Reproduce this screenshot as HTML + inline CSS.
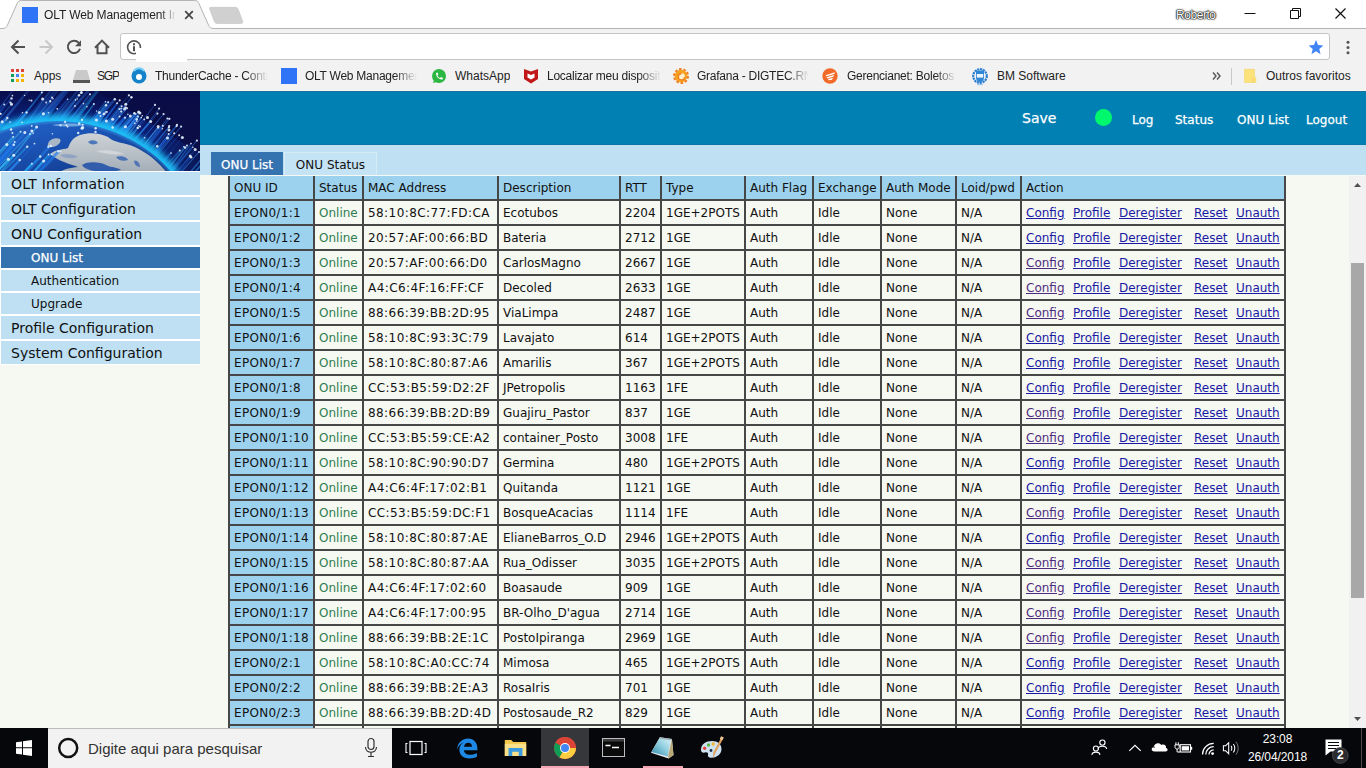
<!DOCTYPE html>
<html lang="pt-BR">
<head>
<meta charset="utf-8">
<title>OLT Web Management Interface</title>
<style>
html,body{margin:0;padding:0;}
body{width:1366px;height:768px;overflow:hidden;position:relative;background:#f6f8f2;font-family:"Liberation Sans",sans-serif;}
.abs{position:absolute;}
/* ---------- browser chrome ---------- */
#titlebar{left:0;top:0;width:1366px;height:29px;background:#fff;z-index:2;}
#toolbar{left:0;top:28px;width:1366px;height:34px;background:#f2f2f2;}
#bookbar{left:0;top:62px;width:1366px;height:28px;background:#f2f2f2;border-bottom:1px solid #fafafa;}
#tabtxt{left:44px;top:7px;font-size:12px;color:#222;white-space:nowrap;width:150px;overflow:hidden;height:16px;line-height:16px;letter-spacing:-.1px;-webkit-mask-image:linear-gradient(90deg,#000 88%,transparent 100%);mask-image:linear-gradient(90deg,#000 88%,transparent 100%);}
#user{left:1176px;top:8px;font-size:12px;line-height:14px;color:#fff;letter-spacing:-.45px;text-shadow:0 0 1px #000,0 0 1px #000,0 0 2px #222,0 0 2px #444;}
#urlbox{left:120px;top:5px;width:1210px;height:27px;background:#fff;border:1px solid #c4c4c4;border-radius:3px;box-sizing:border-box;}
.bm{top:68px;font-size:12px;color:#222;white-space:nowrap;line-height:16px;height:16px;overflow:hidden;}
.bm.fade{letter-spacing:-.25px;}
.fade{-webkit-mask-image:linear-gradient(90deg,#000 80%,transparent 100%);mask-image:linear-gradient(90deg,#000 80%,transparent 100%);}
/* ---------- page ---------- */
#page{left:0;top:90px;width:1366px;height:638px;background:#f6f8f2;overflow:hidden;font-family:"DejaVu Sans","Liberation Sans",sans-serif;}
#hdr{left:200px;top:1px;width:1166px;height:54px;background:#0080b3;box-shadow:inset 0 1px 0 #1a6f9c,inset 0 -1px 0 #0b76a6;}
#band{left:200px;top:55px;width:1166px;height:30px;background:#bee0f2;}
#hdr span{position:absolute;color:#fff;-webkit-text-stroke:.25px #fff;font-size:12px;white-space:nowrap;line-height:16px;}
#logo{left:0;top:1px;width:200px;height:80px;}
.mi{left:1px;width:199px;height:23px;background:#bee0f2;font-size:14px;line-height:25px;overflow:hidden;color:#111;padding-left:10px;box-sizing:border-box;white-space:nowrap;}
.si{left:1px;width:199px;height:21px;background:#bee0f2;font-size:12px;line-height:22px;overflow:hidden;color:#111;padding-left:30px;box-sizing:border-box;white-space:nowrap;}
.si.sel{background:#3572b0;color:#fff;-webkit-text-stroke:.25px #fff;}
#menu{left:0;top:81px;width:200px;height:194px;background:#fff;}
.tab{top:62px;height:23px;line-height:26px;overflow:hidden;font-size:12px;box-sizing:border-box;text-align:center;white-space:nowrap;}
#tbwrap{left:228px;top:86px;width:1060px;height:552px;overflow:hidden;}
table{border-collapse:collapse;table-layout:fixed;width:1058px;margin-top:-2px;font-size:12px;color:#111;}
td,th{border:2px solid #474747;height:23px;padding:0 0 0 4px;text-align:left;font-weight:normal;white-space:nowrap;overflow:hidden;background:#f6f8f2;line-height:14px;}
th,td.id{background:#9cd2ee;}
td.on{color:#2e7d4f;}
td.id{letter-spacing:.3px;}
td.mac{letter-spacing:.42px;}
td.ac a{color:#1919a4;text-decoration:underline;position:absolute;}
td.ac{position:relative;}
td.ac a.v{color:#4f2b80;}
td.ac a{top:5px;}
td.ac a.p{left:51px;}
td.ac a.d{left:97px;}
td.ac a.r{left:172px;}
td.ac a.u{left:214px;}
/* ---------- scrollbar ---------- */
#sb{left:1349px;top:86px;width:17px;height:552px;background:#f1f1f1;}
#thumb{left:1351px;top:173px;width:13px;height:335px;background:#a8a8a8;}
/* ---------- taskbar ---------- */
#task{left:0;top:728px;width:1366px;height:40px;background:#06070b;}
#search{left:48px;top:0;width:344px;height:40px;background:#f2f2f2;border-top:1px solid #bdbdbd;box-sizing:border-box;}
#search span{position:absolute;left:40px;top:11px;font-size:15px;color:#333;white-space:nowrap;line-height:18px;}
#clock{left:1240px;top:1.500px;width:75px;text-align:center;color:#fff;font-size:12px;line-height:18px;letter-spacing:-.1px;}
</style>
</head>
<body>

<!-- ================= BROWSER CHROME ================= -->
<div id="titlebar" class="abs">
  <svg class="abs" style="left:0;top:0" width="260" height="29" viewBox="0 0 260 29">
    <path d="M0 29 V28.500 H3 C5.500 28.300 6.500 27.200 7.500 25 L17 3.700 C18 1.300 19 .500 21.500 .500 H194.500 C197 .500 198 1.300 199 3.700 L208.500 25 C209.500 27.200 210.500 28.300 213 28.500 H260 V29 Z" fill="#f2f2f2"/>
    <path d="M0 28.500 H3 C5.500 28.300 6.500 27.200 7.500 25 L17 3.700 C18 1.300 19 .500 21.500 .500 H194.500 C197 .500 198 1.300 199 3.700 L208.500 25 C209.500 27.200 210.500 28.300 213 28.500 H260" fill="none" stroke="#b4b4b4" stroke-width="1"/>
    <path d="M210.500 7.300 L235 7.300 C236.800 7.300 237.600 8 238.300 9.600 L242.600 21 C243.200 22.700 242.600 23.500 241 23.500 L217.500 23.500 C215.700 23.500 214.900 22.800 214.200 21.200 L209.800 9.600 C209.200 8 209.500 7.300 210.500 7.300 Z" fill="#d0d0d0" stroke="#c4c4c4" stroke-width=".6"/>
    <rect x="22" y="7" width="16" height="16" fill="#2f73f6"/>
    <path d="M185.200 11.200 L192.800 18.800 M192.800 11.200 L185.200 18.800" stroke="#444" stroke-width="1.700" fill="none"/>
  </svg>
  <div id="tabtxt" class="abs fade" style="width:132px">OLT Web Management Interface</div>
  <div class="abs" style="left:259px;top:28px;width:1107px;height:1px;background:#b4b4b4"></div>
  <div id="user" class="abs">Roberto</div>
  <svg class="abs" style="left:1230px;top:0" width="136" height="28" viewBox="0 0 136 28">
    <path d="M14.5 13.5 H25.5" stroke="#111" stroke-width="1"/>
    <path d="M60.5 10.5 H68.5 V18.5 H60.5 Z M62.5 10.5 V8.5 H70.5 V16.5 H68.5" stroke="#111" stroke-width="1" fill="none"/>
    <path d="M105.5 8.5 L115.5 18.5 M115.5 8.5 L105.5 18.5" stroke="#111" stroke-width="1.2" fill="none"/>
  </svg>
</div>

<div id="toolbar" class="abs">
  <svg class="abs" style="left:0;top:0" width="125" height="34" viewBox="0 0 125 34">
    <g fill="none" stroke="#505050" stroke-width="2">
      <path d="M25 19 H12.500 M18.500 12.500 L12 19 L18.500 25.500"/>
      <path d="M39.500 19 H52 M45.500 12.500 L52 19 L45.500 25.500" stroke="#c8c8c8"/>
      <path d="M78.800 14.800 A6.200 6.200 0 1 0 80 20.800"/>
      <path d="M95 19.800 L102 12.600 L109 19.800 M97.500 18 V25.300 H106.500 V18"/>
    </g>
    <path d="M81 12.300 V18.300 H75 Z" fill="#505050"/>
  </svg>
  <div id="urlbox" class="abs"></div>
  <svg class="abs" style="left:125px;top:10px" width="18" height="18" viewBox="0 0 18 18">
    <circle cx="9" cy="9.300" r="6.400" fill="none" stroke="#555" stroke-width="1.600"/>
    <rect x="8" y="8.200" width="2" height="5" fill="#505050"/><rect x="8" y="5.300" width="2" height="2" fill="#505050"/>
  </svg>
  <div class="abs" style="left:136px;top:20px;width:51px;height:14px;background:#fff"></div>
  <svg class="abs" style="left:1306px;top:9px" width="20" height="20" viewBox="0 0 20 20">
    <path d="M10 3 L12.050 8 L17.400 8.450 L13.300 11.950 L14.550 17.200 L10 14.350 L5.450 17.200 L6.700 11.950 L2.600 8.450 L7.950 8 Z" fill="#4285f4"/>
  </svg>
  <svg class="abs" style="left:1344px;top:9px" width="8" height="20" viewBox="0 0 8 20">
    <circle cx="4" cy="5.200" r="1.500" fill="#555"/><circle cx="4" cy="10.500" r="1.500" fill="#555"/><circle cx="4" cy="15.800" r="1.500" fill="#555"/>
  </svg>
</div>

<div id="bookbar" class="abs"></div>
<!-- bookmark icons -->
<svg class="abs" style="left:0;top:62px" width="1366" height="28" viewBox="0 0 1366 28">
  <!-- apps grid -->
  <g>
    <rect x="11" y="7" width="3" height="3" fill="#db4437"/><rect x="16" y="7" width="3" height="3" fill="#db4437"/><rect x="21" y="7" width="3" height="3" fill="#db4437"/>
    <rect x="11" y="12" width="3" height="3" fill="#0f9d58"/><rect x="16" y="12" width="3" height="3" fill="#4285f4"/><rect x="21" y="12" width="3" height="3" fill="#f4b400"/>
    <rect x="11" y="17" width="3" height="3" fill="#0f9d58"/><rect x="16" y="17" width="3" height="3" fill="#f4b400"/><rect x="21" y="17" width="3" height="3" fill="#f4b400"/>
  </g>
  <!-- SGP drive icon -->
  <path d="M76 8 H87 L90 18 H73 Z" fill="#c9c9c9"/><rect x="73" y="18" width="17" height="3" fill="#555"/>
  <!-- thundercache -->
  <circle cx="139" cy="14" r="7.5" fill="#1583c9"/><circle cx="139" cy="15" r="3" fill="#fff"/><path d="M134 9 A6 6 0 0 1 144 9" stroke="#7fd0f5" stroke-width="2" fill="none"/>
  <!-- OLT -->
  <rect x="281" y="6" width="16" height="16" fill="#2f73f6"/>
  <!-- whatsapp -->
  <circle cx="439" cy="14" r="7" fill="#2cb742"/><path d="M433 21 L434.5 16.5 L438 19.5 Z" fill="#2cb742"/><path d="M436 11 C436 15 439 17.5 442.5 17.5 L443 16 L441 15 L440 16 C438.5 15.5 437.5 14 437.5 13 L438.3 12.3 L437.5 10.5 Z" fill="#fff"/>
  <!-- mcafee -->
  <path d="M524 7 L531 9.5 L538 7 V17 L531 21.5 L524 17 Z" fill="#c01818"/><path d="M527.5 11.5 L531 13 L534.5 11.5 V15.5 L531 17.5 L527.5 15.5 Z" fill="#fff"/>
  <!-- grafana -->
  <circle cx="681" cy="14" r="6.300" fill="#f6a21e"/><circle cx="681" cy="14" r="7" fill="none" stroke="#f07f22" stroke-width="2" stroke-dasharray="2.600 1.800"/><circle cx="681.600" cy="14.600" r="3.300" fill="#fdf0cf"/><path d="M681.500 11.500 A3.200 3.200 0 1 0 684.700 15" stroke="#f4801f" stroke-width="1.300" fill="none"/>
  <!-- gerencianet -->
  <circle cx="830" cy="14" r="7.700" fill="#f26a2a"/><path d="M825.500 13.200 L835 10.200 L834.300 12 L826.500 14.300 Z M826.500 15.300 L834 13 L833.300 14.800 L827.500 16.400 Z M827.800 17.300 L833 15.800 L832 17.800 L829 18.300 Z" fill="#fff"/>
  <!-- BM -->
  <circle cx="980" cy="14" r="6.800" fill="none" stroke="#2e7fd0" stroke-width="2.200" stroke-dasharray="2.200 .700"/><path d="M976 8.500 H984 V16 C984 18.500 981.500 20 980 20.800 C978.500 20 976 18.500 976 16 Z" fill="#2f86d6"/><rect x="976.800" y="12" width="6.400" height="3.600" fill="#eef6ff"/><rect x="977" y="22" width="6" height="1.200" fill="#9ec7ee"/>
  <!-- overflow chevrons -->
  <path d="M1213 10.5 L1216 14 L1213 17.5 M1217 10.5 L1220 14 L1217 17.5" stroke="#555" stroke-width="1.4" fill="none"/>
  <rect x="1231" y="6" width="1" height="17" fill="#c8c8c8"/>
  <!-- folder -->
  <path d="M1244.500 7.300 H1254.500 V15.500 H1255.800 V20.500 H1244.500 Z" fill="#fde27c" stroke="#f3d363" stroke-width=".6"/><path d="M1253 16 V20.500" stroke="#f0cd58" stroke-width=".8"/>
</svg>
<div class="abs bm" style="left:34px">Apps</div>
<div class="abs bm" style="left:97px;letter-spacing:-1.2px">SGP</div>
<div class="abs bm fade" style="left:155px;width:113px">ThunderCache - Controle</div>
<div class="abs bm fade" style="left:305px;width:112px">OLT Web Management</div>
<div class="abs bm" style="left:455px">WhatsApp</div>
<div class="abs bm fade" style="left:547px;width:114px">Localizar meu dispositivo</div>
<div class="abs bm fade" style="left:697px;width:112px">Grafana - DIGTEC.RN.</div>
<div class="abs bm fade" style="left:847px;width:110px">Gerencianet: Boletos e</div>
<div class="abs bm" style="left:997px">BM Software</div>
<div class="abs bm" style="left:1266px">Outros favoritos</div>

<!-- ================= PAGE ================= -->
<div id="page" class="abs">
  <div id="hdr" class="abs">
    <span style="left:822px;top:18px;font-size:14px;line-height:18px">Save</span>
    <span style="left:932px;top:21px">Log</span>
    <span style="left:975px;top:21px">Status</span>
    <span style="left:1037px;top:21px">ONU List</span>
    <span style="left:1106px;top:21px">Logout</span>
    <div class="abs" style="left:895px;top:18px;width:17px;height:17px;border-radius:50%;background:#00f96c"></div>
  </div>
  <div id="band" class="abs"></div>
  <div class="abs tab" style="left:211px;width:72px;background:#3572b0;color:#fff;-webkit-text-stroke:.25px #fff">ONU List</div>
  <div class="abs tab" style="left:284px;width:93px;background:#c4e3f4;color:#111;border:1px solid #d4ecf8;border-bottom:none;line-height:24px">ONU Status</div>

  <svg id="logo" class="abs" viewBox="0 0 200 80" preserveAspectRatio="none">
    <defs>
      <linearGradient id="bg" x1="0" y1="0" x2="0" y2="1"><stop offset="0" stop-color="#0a1258"/><stop offset=".45" stop-color="#0c2a90"/><stop offset="1" stop-color="#0f49b8"/></linearGradient>
      <linearGradient id="oc" x1="0" y1="0" x2=".7" y2="1"><stop offset="0" stop-color="#2363c8"/><stop offset=".5" stop-color="#1a50b0"/><stop offset="1" stop-color="#123a8c"/></linearGradient>
      <linearGradient id="ld" x1="0" y1="0" x2="0" y2="1"><stop offset="0" stop-color="#cdd3d6"/><stop offset="1" stop-color="#a2acb6"/></linearGradient>
      <linearGradient id="rt" x1="0" y1="0" x2="1" y2="0"><stop offset="0" stop-color="#0a0d46" stop-opacity="0"/><stop offset="1" stop-color="#0a0d46" stop-opacity=".85"/></linearGradient>
      <linearGradient id="tp" x1="0" y1="0" x2="0" y2="1"><stop offset="0" stop-color="#080c46" stop-opacity=".6"/><stop offset="1" stop-color="#080c46" stop-opacity="0"/></linearGradient>
      <filter id="bl" x="-20%" y="-50%" width="140%" height="200%"><feGaussianBlur stdDeviation="3.2"/></filter>
      <filter id="b1" x="-20%" y="-20%" width="140%" height="140%"><feGaussianBlur stdDeviation=".45"/></filter>
      <filter id="b2" x="-20%" y="-20%" width="140%" height="140%"><feGaussianBlur stdDeviation=".8"/></filter>
      <clipPath id="cl"><rect width="200" height="80"/></clipPath>
      <clipPath id="gc"><path d="M-2 41 C25 31 55 28 80 32 C115 37 150 55 172 82 L-2 82 Z"/></clipPath>
    </defs>
    <g clip-path="url(#cl)">
      <rect width="200" height="80" fill="url(#bg)"/>
      <rect x="90" width="110" height="80" fill="url(#rt)"/>
      <path d="M96 0 H200 V62 Z" fill="#0a0d46"/>
      <g stroke-linecap="round" filter="url(#b1)">
<line x1="51.7" y1="82.0" x2="108.2" y2="11.3" stroke="#2f7df2" stroke-opacity="0.83" stroke-width="2.4"/>
<line x1="-23.3" y1="82.0" x2="41.8" y2="1.5" stroke="#1e6ff0" stroke-opacity="0.65" stroke-width="1.3"/>
<line x1="-49.6" y1="82.0" x2="13.8" y2="-1.7" stroke="#2f7df2" stroke-opacity="0.89" stroke-width="1"/>
<line x1="-21.7" y1="82.0" x2="12.4" y2="42.1" stroke="#1a58d8" stroke-opacity="0.65" stroke-width="2.4"/>
<line x1="70.4" y1="82.0" x2="112.7" y2="28.2" stroke="#3aa0ff" stroke-opacity="0.74" stroke-width="1"/>
<line x1="-3.9" y1="82.0" x2="53.0" y2="7.7" stroke="#1e6ff0" stroke-opacity="0.70" stroke-width="1"/>
<line x1="37.1" y1="82.0" x2="86.9" y2="15.8" stroke="#2a8cf5" stroke-opacity="0.54" stroke-width="1"/>
<line x1="56.6" y1="82.0" x2="106.0" y2="14.3" stroke="#1f9bf0" stroke-opacity="0.54" stroke-width="3.2"/>
<line x1="19.3" y1="82.0" x2="52.4" y2="42.8" stroke="#1e6ff0" stroke-opacity="0.51" stroke-width="2.4"/>
<line x1="-71.9" y1="82.0" x2="-14.2" y2="11.2" stroke="#2a8cf5" stroke-opacity="0.65" stroke-width="3.2"/>
<line x1="-34.0" y1="82.0" x2="-1.8" y2="42.7" stroke="#1a58d8" stroke-opacity="0.82" stroke-width="3.2"/>
<line x1="-54.4" y1="82.0" x2="11.5" y2="7.4" stroke="#1e6ff0" stroke-opacity="0.72" stroke-width="1.3"/>
<line x1="99.2" y1="82.0" x2="140.0" y2="35.4" stroke="#3aa0ff" stroke-opacity="0.33" stroke-width="1"/>
<line x1="154.0" y1="82.0" x2="171.0" y2="62.1" stroke="#2a8cf5" stroke-opacity="0.47" stroke-width="1.6"/>
<line x1="43.0" y1="82.0" x2="78.2" y2="42.0" stroke="#1f9bf0" stroke-opacity="0.77" stroke-width="1.3"/>
<line x1="42.8" y1="82.0" x2="93.9" y2="13.1" stroke="#1f9bf0" stroke-opacity="0.89" stroke-width="1.3"/>
<line x1="-11.0" y1="82.0" x2="55.4" y2="-1.1" stroke="#1e6ff0" stroke-opacity="0.58" stroke-width="3.2"/>
<line x1="28.3" y1="82.0" x2="66.4" y2="34.2" stroke="#3aa0ff" stroke-opacity="0.89" stroke-width="1.3"/>
<line x1="90.2" y1="82.0" x2="134.4" y2="22.2" stroke="#1e6ff0" stroke-opacity="0.46" stroke-width="1.8"/>
<line x1="60.0" y1="82.0" x2="107.1" y2="20.9" stroke="#3aa0ff" stroke-opacity="0.70" stroke-width="1"/>
<line x1="177.1" y1="82.0" x2="195.2" y2="58.4" stroke="#1e6ff0" stroke-opacity="0.47" stroke-width="0.8"/>
<line x1="189.4" y1="82.0" x2="207.1" y2="62.3" stroke="#1f9bf0" stroke-opacity="0.39" stroke-width="0.8"/>
<line x1="-49.6" y1="82.0" x2="-2.2" y2="28.0" stroke="#1f9bf0" stroke-opacity="0.60" stroke-width="2.4"/>
<line x1="48.3" y1="82.0" x2="82.7" y2="36.4" stroke="#1a58d8" stroke-opacity="0.72" stroke-width="1"/>
<line x1="-68.8" y1="82.0" x2="-33.5" y2="33.9" stroke="#1f9bf0" stroke-opacity="0.86" stroke-width="3.2"/>
<line x1="176.0" y1="82.0" x2="190.2" y2="65.0" stroke="#2f7df2" stroke-opacity="0.33" stroke-width="1.2"/>
<line x1="64.5" y1="82.0" x2="119.4" y2="17.9" stroke="#1f9bf0" stroke-opacity="0.64" stroke-width="1.3"/>
<line x1="171.5" y1="82.0" x2="192.9" y2="56.2" stroke="#2a8cf5" stroke-opacity="0.32" stroke-width="1.2"/>
<line x1="124.1" y1="82.0" x2="158.2" y2="35.6" stroke="#3aa0ff" stroke-opacity="0.41" stroke-width="1"/>
<line x1="100.2" y1="82.0" x2="138.5" y2="34.8" stroke="#1a58d8" stroke-opacity="0.30" stroke-width="0.8"/>
<line x1="114.9" y1="82.0" x2="144.7" y2="46.8" stroke="#1e6ff0" stroke-opacity="0.46" stroke-width="1.6"/>
<line x1="140.4" y1="82.0" x2="174.2" y2="42.2" stroke="#3aa0ff" stroke-opacity="0.31" stroke-width="1.2"/>
<line x1="-19.2" y1="82.0" x2="22.0" y2="31.4" stroke="#3aa0ff" stroke-opacity="0.69" stroke-width="1"/>
<line x1="-24.9" y1="82.0" x2="26.6" y2="21.5" stroke="#2f7df2" stroke-opacity="0.73" stroke-width="3.2"/>
<line x1="35.2" y1="82.0" x2="98.8" y2="-1.6" stroke="#1f9bf0" stroke-opacity="0.62" stroke-width="2.4"/>
<line x1="51.1" y1="82.0" x2="114.8" y2="8.3" stroke="#2f7df2" stroke-opacity="0.71" stroke-width="2.4"/>
<line x1="54.8" y1="82.0" x2="96.4" y2="28.9" stroke="#2a8cf5" stroke-opacity="0.56" stroke-width="1"/>
<line x1="199.5" y1="82.0" x2="209.9" y2="67.8" stroke="#1f9bf0" stroke-opacity="0.52" stroke-width="1.2"/>
<line x1="48.5" y1="82.0" x2="105.5" y2="10.7" stroke="#2a8cf5" stroke-opacity="0.81" stroke-width="1"/>
<line x1="45.1" y1="82.0" x2="99.3" y2="21.4" stroke="#3aa0ff" stroke-opacity="0.52" stroke-width="1.3"/>
<line x1="189.8" y1="82.0" x2="206.6" y2="61.3" stroke="#3aa0ff" stroke-opacity="0.43" stroke-width="1.2"/>
<line x1="71.4" y1="82.0" x2="121.6" y2="15.2" stroke="#2f7df2" stroke-opacity="0.54" stroke-width="2.4"/>
<line x1="196.2" y1="82.0" x2="210.4" y2="64.3" stroke="#2f7df2" stroke-opacity="0.31" stroke-width="0.8"/>
<line x1="75.7" y1="82.0" x2="125.0" y2="26.8" stroke="#1e6ff0" stroke-opacity="0.67" stroke-width="3.2"/>
<line x1="-56.5" y1="82.0" x2="-3.2" y2="15.6" stroke="#1a58d8" stroke-opacity="0.56" stroke-width="2.4"/>
<line x1="-39.4" y1="82.0" x2="28.7" y2="-0.9" stroke="#2f7df2" stroke-opacity="0.59" stroke-width="2.4"/>
<line x1="-21.4" y1="82.0" x2="44.7" y2="-1.7" stroke="#1f9bf0" stroke-opacity="0.80" stroke-width="1.3"/>
<line x1="-68.6" y1="82.0" x2="-23.3" y2="29.6" stroke="#1a58d8" stroke-opacity="0.78" stroke-width="1.8"/>
<line x1="98.5" y1="82.0" x2="147.5" y2="26.4" stroke="#2f7df2" stroke-opacity="0.35" stroke-width="1"/>
<line x1="-68.5" y1="82.0" x2="-2.8" y2="-1.4" stroke="#2a8cf5" stroke-opacity="0.69" stroke-width="3.2"/>
<line x1="84.6" y1="82.0" x2="134.4" y2="22.3" stroke="#1f9bf0" stroke-opacity="0.68" stroke-width="1"/>
<line x1="65.8" y1="82.0" x2="106.4" y2="29.9" stroke="#1e6ff0" stroke-opacity="0.46" stroke-width="2.4"/>
<line x1="-34.0" y1="82.0" x2="10.1" y2="31.1" stroke="#1a58d8" stroke-opacity="0.87" stroke-width="1.3"/>
<line x1="87.3" y1="82.0" x2="139.9" y2="21.9" stroke="#1a58d8" stroke-opacity="0.63" stroke-width="1"/>
<line x1="69.3" y1="82.0" x2="125.8" y2="13.2" stroke="#2a8cf5" stroke-opacity="0.53" stroke-width="1"/>
<line x1="25.7" y1="82.0" x2="83.5" y2="12.6" stroke="#1e6ff0" stroke-opacity="0.68" stroke-width="1.3"/>
<line x1="15.6" y1="82.0" x2="89.5" y2="-1.6" stroke="#2f7df2" stroke-opacity="0.72" stroke-width="2.4"/>
<line x1="66.2" y1="82.0" x2="117.1" y2="12.2" stroke="#1e6ff0" stroke-opacity="0.78" stroke-width="1.8"/>
<line x1="-23.3" y1="82.0" x2="22.5" y2="21.8" stroke="#1e6ff0" stroke-opacity="0.85" stroke-width="1"/>
<line x1="-10.0" y1="82.0" x2="50.8" y2="-0.7" stroke="#2a8cf5" stroke-opacity="0.75" stroke-width="1.8"/>
<line x1="84.5" y1="82.0" x2="130.3" y2="25.0" stroke="#1f9bf0" stroke-opacity="0.50" stroke-width="1.3"/>
<line x1="-8.6" y1="82.0" x2="50.3" y2="10.1" stroke="#1f9bf0" stroke-opacity="0.62" stroke-width="1.3"/>
<line x1="-2.6" y1="82.0" x2="48.5" y2="21.8" stroke="#2f7df2" stroke-opacity="0.64" stroke-width="3.2"/>
<line x1="103.6" y1="82.0" x2="137.7" y2="37.0" stroke="#3aa0ff" stroke-opacity="0.54" stroke-width="1"/>
<line x1="164.6" y1="82.0" x2="185.1" y2="56.5" stroke="#3aa0ff" stroke-opacity="0.36" stroke-width="1.6"/>
<line x1="73.5" y1="82.0" x2="119.5" y2="25.4" stroke="#1e6ff0" stroke-opacity="0.46" stroke-width="1.8"/>
<line x1="89.0" y1="82.0" x2="125.4" y2="35.8" stroke="#1e6ff0" stroke-opacity="0.85" stroke-width="2.4"/>
<line x1="-61.0" y1="82.0" x2="-0.7" y2="-0.7" stroke="#2a8cf5" stroke-opacity="0.64" stroke-width="1"/>
<line x1="58.7" y1="82.0" x2="100.5" y2="24.9" stroke="#1f9bf0" stroke-opacity="0.86" stroke-width="1"/>
<line x1="-60.4" y1="82.0" x2="-22.4" y2="34.8" stroke="#2a8cf5" stroke-opacity="0.75" stroke-width="2.4"/>
<line x1="93.3" y1="82.0" x2="137.8" y2="25.4" stroke="#2a8cf5" stroke-opacity="0.88" stroke-width="3.2"/>
<line x1="-8.2" y1="82.0" x2="64.3" y2="-0.5" stroke="#2f7df2" stroke-opacity="0.83" stroke-width="3.2"/>
<line x1="1.9" y1="82.0" x2="67.5" y2="-0.9" stroke="#2a8cf5" stroke-opacity="0.73" stroke-width="3.2"/>
<line x1="-2.3" y1="82.0" x2="33.2" y2="42.3" stroke="#2f7df2" stroke-opacity="0.58" stroke-width="1.3"/>
<line x1="180.6" y1="82.0" x2="199.0" y2="60.9" stroke="#3aa0ff" stroke-opacity="0.38" stroke-width="1.2"/>
<line x1="159.8" y1="82.0" x2="179.8" y2="59.4" stroke="#3aa0ff" stroke-opacity="0.40" stroke-width="1.2"/>
<line x1="28.3" y1="82.0" x2="90.0" y2="3.2" stroke="#2f7df2" stroke-opacity="0.79" stroke-width="1.8"/>
<line x1="44.7" y1="82.0" x2="82.0" y2="37.2" stroke="#2f7df2" stroke-opacity="0.49" stroke-width="1"/>
<line x1="153.3" y1="82.0" x2="182.4" y2="46.4" stroke="#1a58d8" stroke-opacity="0.34" stroke-width="0.8"/>
<line x1="128.0" y1="82.0" x2="162.4" y2="37.7" stroke="#1a58d8" stroke-opacity="0.46" stroke-width="1.2"/>
<line x1="15.3" y1="82.0" x2="79.0" y2="4.2" stroke="#3aa0ff" stroke-opacity="0.69" stroke-width="1.8"/>
<line x1="53.3" y1="82.0" x2="104.3" y2="22.6" stroke="#2a8cf5" stroke-opacity="0.49" stroke-width="3.2"/>
<line x1="-68.2" y1="82.0" x2="-6.9" y2="3.4" stroke="#1f9bf0" stroke-opacity="0.70" stroke-width="1.3"/>
<line x1="76.4" y1="82.0" x2="125.6" y2="16.6" stroke="#3aa0ff" stroke-opacity="0.85" stroke-width="1"/>
<line x1="78.1" y1="82.0" x2="112.7" y2="36.5" stroke="#1f9bf0" stroke-opacity="0.50" stroke-width="1.8"/>
<line x1="-51.3" y1="82.0" x2="-12.8" y2="33.1" stroke="#2a8cf5" stroke-opacity="0.77" stroke-width="2.4"/>
<line x1="139.3" y1="82.0" x2="167.5" y2="47.0" stroke="#1a58d8" stroke-opacity="0.50" stroke-width="1.2"/>
<line x1="61.7" y1="82.0" x2="95.6" y2="37.3" stroke="#3aa0ff" stroke-opacity="0.79" stroke-width="1"/>
<line x1="164.0" y1="82.0" x2="183.8" y2="55.8" stroke="#1f9bf0" stroke-opacity="0.29" stroke-width="1.2"/>
<line x1="43.1" y1="82.0" x2="82.7" y2="33.8" stroke="#1f9bf0" stroke-opacity="0.62" stroke-width="1.3"/>
<line x1="14.8" y1="82.0" x2="75.5" y2="8.9" stroke="#1e6ff0" stroke-opacity="0.66" stroke-width="1.8"/>
<line x1="10.0" y1="82.0" x2="82.4" y2="-1.1" stroke="#3aa0ff" stroke-opacity="0.46" stroke-width="1"/>
<line x1="59.7" y1="82.0" x2="106.0" y2="21.0" stroke="#1a58d8" stroke-opacity="0.55" stroke-width="1.3"/>
<line x1="93.0" y1="82.0" x2="136.7" y2="28.3" stroke="#1a58d8" stroke-opacity="0.63" stroke-width="1.3"/>
<line x1="100.5" y1="82.0" x2="141.3" y2="26.6" stroke="#3aa0ff" stroke-opacity="0.53" stroke-width="1.2"/>
<line x1="60.1" y1="82.0" x2="95.5" y2="40.9" stroke="#2f7df2" stroke-opacity="0.81" stroke-width="2.4"/>
<line x1="145.5" y1="82.0" x2="179.2" y2="44.2" stroke="#1a58d8" stroke-opacity="0.40" stroke-width="1"/>
<line x1="41.4" y1="82.0" x2="79.2" y2="32.5" stroke="#1f9bf0" stroke-opacity="0.78" stroke-width="1.3"/>
<line x1="69.5" y1="82.0" x2="127.1" y2="17.3" stroke="#2a8cf5" stroke-opacity="0.82" stroke-width="1"/>
<line x1="134.6" y1="82.0" x2="169.0" y2="39.1" stroke="#3aa0ff" stroke-opacity="0.33" stroke-width="0.8"/>
<line x1="-16.6" y1="82.0" x2="42.6" y2="8.1" stroke="#1a58d8" stroke-opacity="0.59" stroke-width="1.3"/>
<line x1="-53.7" y1="82.0" x2="4.2" y2="13.4" stroke="#1a58d8" stroke-opacity="0.48" stroke-width="1"/>
<line x1="-45.4" y1="82.0" x2="11.5" y2="13.3" stroke="#1f9bf0" stroke-opacity="0.65" stroke-width="1"/>
<line x1="124.3" y1="82.0" x2="162.8" y2="34.7" stroke="#1e6ff0" stroke-opacity="0.52" stroke-width="1"/>
<line x1="6.3" y1="82.0" x2="67.6" y2="8.3" stroke="#1a58d8" stroke-opacity="0.79" stroke-width="1.8"/>
<line x1="-3.2" y1="82.0" x2="68.8" y2="-1.4" stroke="#1a58d8" stroke-opacity="0.88" stroke-width="1.8"/>
<line x1="82.6" y1="82.0" x2="127.9" y2="23.3" stroke="#1e6ff0" stroke-opacity="0.51" stroke-width="1"/>
<line x1="-38.2" y1="82.0" x2="2.2" y2="30.7" stroke="#3aa0ff" stroke-opacity="0.47" stroke-width="1.3"/>
<line x1="91.0" y1="82.0" x2="136.8" y2="30.1" stroke="#3aa0ff" stroke-opacity="0.63" stroke-width="1"/>
<line x1="20.7" y1="82.0" x2="81.4" y2="1.6" stroke="#2a8cf5" stroke-opacity="0.82" stroke-width="1.3"/>
<line x1="60.2" y1="82.0" x2="103.5" y2="23.3" stroke="#2f7df2" stroke-opacity="0.76" stroke-width="2.4"/>
<line x1="30.7" y1="82.0" x2="98.0" y2="-1.2" stroke="#1f9bf0" stroke-opacity="0.52" stroke-width="3.2"/>
<line x1="139.6" y1="82.0" x2="168.6" y2="43.0" stroke="#2f7df2" stroke-opacity="0.42" stroke-width="1"/>
<line x1="83.9" y1="82.0" x2="138.6" y2="20.9" stroke="#2a8cf5" stroke-opacity="0.67" stroke-width="1.3"/>
<line x1="120.2" y1="82.0" x2="158.1" y2="36.8" stroke="#3aa0ff" stroke-opacity="0.53" stroke-width="1.6"/>
<line x1="-8.2" y1="82.0" x2="52.0" y2="6.6" stroke="#2f7df2" stroke-opacity="0.86" stroke-width="1"/>
<line x1="179.6" y1="82.0" x2="191.1" y2="66.2" stroke="#1e6ff0" stroke-opacity="0.54" stroke-width="0.8"/>
<line x1="-7.6" y1="82.0" x2="58.9" y2="-1.4" stroke="#2f7df2" stroke-opacity="0.70" stroke-width="1.3"/>
<line x1="-53.6" y1="82.0" x2="-10.1" y2="33.3" stroke="#1a58d8" stroke-opacity="0.79" stroke-width="1.3"/>
<line x1="97.3" y1="82.0" x2="142.3" y2="24.7" stroke="#3aa0ff" stroke-opacity="0.41" stroke-width="1"/>
<line x1="84.5" y1="82.0" x2="135.7" y2="23.0" stroke="#2f7df2" stroke-opacity="0.87" stroke-width="1.3"/>
<line x1="104.7" y1="82.0" x2="150.7" y2="30.5" stroke="#3aa0ff" stroke-opacity="0.45" stroke-width="1.6"/>
<line x1="135.5" y1="82.0" x2="157.3" y2="55.2" stroke="#3aa0ff" stroke-opacity="0.31" stroke-width="0.8"/>
<line x1="72.0" y1="82.0" x2="124.6" y2="18.0" stroke="#1a58d8" stroke-opacity="0.78" stroke-width="1"/>
<line x1="169.5" y1="82.0" x2="191.0" y2="52.6" stroke="#2a8cf5" stroke-opacity="0.43" stroke-width="1.6"/>
<line x1="-6.7" y1="82.0" x2="43.4" y2="22.7" stroke="#3aa0ff" stroke-opacity="0.85" stroke-width="1"/>
<line x1="-35.4" y1="82.0" x2="7.3" y2="27.0" stroke="#1e6ff0" stroke-opacity="0.65" stroke-width="1.8"/>
<line x1="11.2" y1="82.0" x2="78.8" y2="-1.4" stroke="#2a8cf5" stroke-opacity="0.54" stroke-width="2.4"/>
<line x1="165.5" y1="82.0" x2="187.0" y2="54.4" stroke="#3aa0ff" stroke-opacity="0.28" stroke-width="1"/>
<line x1="-21.4" y1="82.0" x2="11.1" y2="38.5" stroke="#1a58d8" stroke-opacity="0.78" stroke-width="1"/>
<line x1="194.2" y1="82.0" x2="209.5" y2="63.9" stroke="#1f9bf0" stroke-opacity="0.55" stroke-width="1.6"/>
<line x1="88.0" y1="61.4" x2="131.2" y2="6.3" stroke="#2a7cf0" stroke-opacity=".6" stroke-width="1"/>
<line x1="83.8" y1="57.9" x2="128.9" y2="4.3" stroke="#2a7cf0" stroke-opacity=".6" stroke-width="1"/>
<line x1="124.6" y1="89.1" x2="169.2" y2="35.1" stroke="#2a7cf0" stroke-opacity=".6" stroke-width="1"/>
<line x1="125.2" y1="91.0" x2="168.9" y2="36.3" stroke="#2a7cf0" stroke-opacity=".6" stroke-width="1"/>
<line x1="89.3" y1="62.0" x2="131.7" y2="6.3" stroke="#2a7cf0" stroke-opacity=".6" stroke-width="1"/>
<line x1="125.8" y1="82.6" x2="169.4" y2="27.8" stroke="#2a7cf0" stroke-opacity=".6" stroke-width="1"/>
<line x1="75.5" y1="63.5" x2="119.7" y2="9.3" stroke="#2a7cf0" stroke-opacity=".6" stroke-width="1"/>
<line x1="111.7" y1="75.6" x2="157.4" y2="22.6" stroke="#2a7cf0" stroke-opacity=".6" stroke-width="1"/>
<line x1="118.6" y1="76.7" x2="163.6" y2="23.1" stroke="#2a7cf0" stroke-opacity=".6" stroke-width="1"/>
<line x1="136.2" y1="89.3" x2="181.1" y2="35.6" stroke="#2a7cf0" stroke-opacity=".6" stroke-width="1"/>
<line x1="132.1" y1="87.5" x2="177.0" y2="33.8" stroke="#2a7cf0" stroke-opacity=".6" stroke-width="1"/>
<line x1="116.6" y1="73.2" x2="159.1" y2="17.6" stroke="#2a7cf0" stroke-opacity=".6" stroke-width="1"/>
<line x1="152.7" y1="103.9" x2="196.9" y2="49.6" stroke="#2a7cf0" stroke-opacity=".6" stroke-width="1"/>
<line x1="134.1" y1="90.8" x2="176.6" y2="35.1" stroke="#2a7cf0" stroke-opacity=".6" stroke-width="1"/>
<line x1="111.2" y1="68.5" x2="155.0" y2="13.9" stroke="#2a7cf0" stroke-opacity=".6" stroke-width="1"/>
<line x1="124.0" y1="82.3" x2="167.5" y2="27.5" stroke="#2a7cf0" stroke-opacity=".6" stroke-width="1"/>
      </g>
      <rect width="200" height="34" fill="url(#tp)"/>
      <path d="M-2 41 C25 31 55 28 80 32 C115 37 150 55 174 84" fill="none" stroke="#1cc0f6" stroke-width="13" filter="url(#bl)"/>
      <path d="M-2 41 C25 31 55 28 80 32 C115 37 150 55 172 82 L-2 82 Z" fill="url(#oc)"/>
      <g clip-path="url(#gc)">
        <path d="M-2 41 C25 31 55 28 80 32 C115 37 150 55 172 82" fill="none" stroke="#3aa8ee" stroke-width="3" stroke-opacity=".55" filter="url(#b2)"/>
        <g filter="url(#b1)">
        <path d="M50 63 C56 58 62 59 68 57 C70 52 72 47 80 44 C90 41 100 42 108 46 C112 50 118 51 126 53 C138 56 150 64 158 72 C163 77 166 80 168 83 L58 83 C62 78 70 77 78 76 C70 73 58 70 50 63 Z" fill="url(#ld)"/>
        <path d="M48 53 C49 48 56 46 60 48 C62 51 58 55 53 56 C50 56 47 55 48 53 Z" fill="#a9b6c6"/>
        <path d="M88 51 C91 48 97 49 98 52 C95 54 90 54 88 51 Z" fill="#2a5cb4" fill-opacity=".75"/>
        <path d="M82 74 C88 70 100 71 106 74 C112 77 118 76 121 79 C112 82 96 81 90 79 C86 78 83 76 82 74 Z" fill="#2253a8" fill-opacity=".9"/>
        <path d="M116 66 C121 64 127 66 128 69 C123 71 118 69 116 66 Z" fill="#2a5ab0" fill-opacity=".75"/>
        <path d="M134 70 C137 69 140 72 140 76 C137 76 134 73 134 70 Z" fill="#2a5ab0" fill-opacity=".7"/>
        <path d="M60 64 C66 62 74 63 78 66 C72 68 64 68 60 64 Z" fill="#6d8cc0" fill-opacity=".5"/>
        <path d="M96 60 C106 58 118 60 124 63 C114 64 104 63 96 60 Z" fill="#e4e8ea" fill-opacity=".55"/>
        <path d="M52 34 C62 32 76 32 84 34 C76 36 62 36 52 34 Z" fill="#8fc4ee" fill-opacity=".7"/>
        </g>
      </g>
      <g stroke-linecap="round" filter="url(#b1)">
<line x1="26.6" y1="82.0" x2="50.8" y2="55.0" stroke="#2a8cf5" stroke-opacity="0.49" stroke-width="1.5"/>
<line x1="-20.0" y1="82.0" x2="13.2" y2="45.8" stroke="#35b8f5" stroke-opacity="0.65" stroke-width="1.5"/>
<line x1="32.5" y1="82.0" x2="48.6" y2="63.5" stroke="#22a8f0" stroke-opacity="0.68" stroke-width="1.5"/>
<line x1="-12.4" y1="82.0" x2="14.7" y2="51.0" stroke="#1e78e8" stroke-opacity="0.74" stroke-width="2.6"/>
<line x1="-33.8" y1="82.0" x2="-9.2" y2="51.3" stroke="#2a8cf5" stroke-opacity="0.47" stroke-width="1.5"/>
<line x1="-36.4" y1="82.0" x2="-7.6" y2="51.7" stroke="#1e78e8" stroke-opacity="0.49" stroke-width="2"/>
<line x1="-25.4" y1="82.0" x2="-11.8" y2="67.8" stroke="#22a8f0" stroke-opacity="0.58" stroke-width="2.6"/>
<line x1="-9.0" y1="82.0" x2="31.9" y2="40.0" stroke="#2a8cf5" stroke-opacity="0.65" stroke-width="1"/>
<line x1="23.3" y1="82.0" x2="40.2" y2="65.5" stroke="#22a8f0" stroke-opacity="0.61" stroke-width="1.5"/>
<line x1="0.1" y1="82.0" x2="36.6" y2="36.1" stroke="#35b8f5" stroke-opacity="0.55" stroke-width="1.5"/>
<line x1="32.7" y1="82.0" x2="43.6" y2="70.1" stroke="#35b8f5" stroke-opacity="0.57" stroke-width="1.5"/>
<line x1="-21.4" y1="82.0" x2="6.8" y2="53.5" stroke="#35b8f5" stroke-opacity="0.68" stroke-width="1"/>
<line x1="39.5" y1="82.0" x2="60.6" y2="60.4" stroke="#2a8cf5" stroke-opacity="0.62" stroke-width="1"/>
<line x1="-24.4" y1="82.0" x2="-11.2" y2="67.1" stroke="#1e78e8" stroke-opacity="0.54" stroke-width="1.5"/>
<line x1="24.6" y1="82.0" x2="48.4" y2="55.7" stroke="#1e78e8" stroke-opacity="0.53" stroke-width="1.5"/>
<line x1="-4.4" y1="82.0" x2="13.7" y2="64.3" stroke="#22a8f0" stroke-opacity="0.66" stroke-width="2"/>
<line x1="-17.7" y1="82.0" x2="20.6" y2="40.7" stroke="#35b8f5" stroke-opacity="0.49" stroke-width="1.5"/>
<line x1="-27.0" y1="82.0" x2="-8.7" y2="59.1" stroke="#22a8f0" stroke-opacity="0.46" stroke-width="1.5"/>
<line x1="-7.6" y1="82.0" x2="30.0" y2="43.0" stroke="#35b8f5" stroke-opacity="0.61" stroke-width="1"/>
<line x1="1.5" y1="82.0" x2="27.2" y2="55.8" stroke="#22a8f0" stroke-opacity="0.53" stroke-width="1.5"/>
<line x1="-4.0" y1="82.0" x2="8.4" y2="68.2" stroke="#35b8f5" stroke-opacity="0.74" stroke-width="2"/>
<line x1="-8.0" y1="82.0" x2="24.8" y2="41.5" stroke="#1e78e8" stroke-opacity="0.50" stroke-width="2.6"/>
<line x1="33.6" y1="82.0" x2="51.7" y2="63.3" stroke="#2a8cf5" stroke-opacity="0.51" stroke-width="2"/>
<line x1="23.5" y1="82.0" x2="31.9" y2="72.7" stroke="#22a8f0" stroke-opacity="0.82" stroke-width="2"/>
<line x1="7.4" y1="82.0" x2="19.7" y2="69.0" stroke="#2a8cf5" stroke-opacity="0.76" stroke-width="2"/>
<line x1="-32.4" y1="82.0" x2="-11.5" y2="59.3" stroke="#1e78e8" stroke-opacity="0.60" stroke-width="1"/>
<line x1="-15.8" y1="82.0" x2="-1.1" y2="64.8" stroke="#2a8cf5" stroke-opacity="0.64" stroke-width="2.6"/>
<line x1="-10.2" y1="82.0" x2="13.7" y2="53.8" stroke="#1e78e8" stroke-opacity="0.77" stroke-width="2"/>
<line x1="9.5" y1="82.0" x2="34.5" y2="52.6" stroke="#1e78e8" stroke-opacity="0.50" stroke-width="1"/>
<line x1="37.6" y1="82.0" x2="58.4" y2="60.3" stroke="#1e78e8" stroke-opacity="0.74" stroke-width="2"/>
<line x1="-33.9" y1="82.0" x2="-14.1" y2="62.8" stroke="#35b8f5" stroke-opacity="0.55" stroke-width="2"/>
      </g>
      <g fill="#eaf6ff" fill-opacity=".88" filter="url(#b1)">
<circle cx="108.2" cy="11.3" r="1.0"/>
<circle cx="41.8" cy="1.5" r="1.0"/>
<circle cx="12.4" cy="42.1" r="1.0"/>
<circle cx="112.7" cy="28.2" r="1.5"/>
<circle cx="53.0" cy="7.7" r="0.8"/>
<circle cx="86.9" cy="15.8" r="0.8"/>
<circle cx="106.0" cy="14.3" r="1.2"/>
<circle cx="52.4" cy="42.8" r="0.8"/>
<circle cx="-14.2" cy="11.2" r="1.0"/>
<circle cx="-1.8" cy="42.7" r="1.5"/>
<circle cx="11.5" cy="7.4" r="1.2"/>
<circle cx="140.0" cy="35.4" r="1.0"/>
<circle cx="171.0" cy="62.1" r="0.8"/>
<circle cx="78.2" cy="42.0" r="1.2"/>
<circle cx="93.9" cy="13.1" r="1.0"/>
<circle cx="66.4" cy="34.2" r="1.0"/>
<circle cx="134.4" cy="22.2" r="0.8"/>
<circle cx="107.1" cy="20.9" r="0.8"/>
<circle cx="195.2" cy="58.4" r="1.5"/>
<circle cx="207.1" cy="62.3" r="0.8"/>
<circle cx="-2.2" cy="28.0" r="1.5"/>
<circle cx="82.7" cy="36.4" r="1.5"/>
<circle cx="-33.5" cy="33.9" r="1.2"/>
<circle cx="190.2" cy="65.0" r="1.5"/>
<circle cx="119.4" cy="17.9" r="1.0"/>
<circle cx="192.9" cy="56.2" r="0.8"/>
<circle cx="158.2" cy="35.6" r="1.5"/>
<circle cx="138.5" cy="34.8" r="0.8"/>
<circle cx="144.7" cy="46.8" r="0.8"/>
<circle cx="174.2" cy="42.2" r="1.0"/>
<circle cx="22.0" cy="31.4" r="0.8"/>
<circle cx="26.6" cy="21.5" r="1.0"/>
<circle cx="114.8" cy="8.3" r="1.2"/>
<circle cx="96.4" cy="28.9" r="1.5"/>
<circle cx="209.9" cy="67.8" r="0.8"/>
<circle cx="105.5" cy="10.7" r="0.8"/>
<circle cx="99.3" cy="21.4" r="1.5"/>
<circle cx="206.6" cy="61.3" r="1.0"/>
<circle cx="121.6" cy="15.2" r="1.0"/>
<circle cx="210.4" cy="64.3" r="0.8"/>
<circle cx="125.0" cy="26.8" r="1.0"/>
<circle cx="-3.2" cy="15.6" r="1.5"/>
<circle cx="-23.3" cy="29.6" r="1.0"/>
<circle cx="147.5" cy="26.4" r="1.5"/>
<circle cx="134.4" cy="22.3" r="1.2"/>
<circle cx="106.4" cy="29.9" r="1.5"/>
<circle cx="10.1" cy="31.1" r="0.8"/>
<circle cx="139.9" cy="21.9" r="1.5"/>
<circle cx="125.8" cy="13.2" r="1.5"/>
<circle cx="83.5" cy="12.6" r="0.8"/>
<circle cx="117.1" cy="12.2" r="1.0"/>
<circle cx="22.5" cy="21.8" r="0.8"/>
<circle cx="130.3" cy="25.0" r="1.5"/>
<circle cx="50.3" cy="10.1" r="0.8"/>
<circle cx="48.5" cy="21.8" r="0.8"/>
<circle cx="137.7" cy="37.0" r="1.0"/>
<circle cx="185.1" cy="56.5" r="1.2"/>
<circle cx="119.5" cy="25.4" r="1.0"/>
<circle cx="125.4" cy="35.8" r="1.5"/>
<circle cx="100.5" cy="24.9" r="1.0"/>
<circle cx="-22.4" cy="34.8" r="1.5"/>
<circle cx="137.8" cy="25.4" r="1.0"/>
<circle cx="33.2" cy="42.3" r="0.8"/>
<circle cx="199.0" cy="60.9" r="1.0"/>
<circle cx="179.8" cy="59.4" r="1.0"/>
<circle cx="90.0" cy="3.2" r="1.0"/>
<circle cx="82.0" cy="37.2" r="1.5"/>
<circle cx="182.4" cy="46.4" r="1.5"/>
<circle cx="162.4" cy="37.7" r="0.8"/>
<circle cx="79.0" cy="4.2" r="1.2"/>
<circle cx="104.3" cy="22.6" r="1.2"/>
<circle cx="-6.9" cy="3.4" r="1.5"/>
<circle cx="125.6" cy="16.6" r="1.2"/>
<circle cx="112.7" cy="36.5" r="1.2"/>
<circle cx="-12.8" cy="33.1" r="1.5"/>
<circle cx="167.5" cy="47.0" r="1.5"/>
<circle cx="95.6" cy="37.3" r="1.2"/>
<circle cx="183.8" cy="55.8" r="0.8"/>
<circle cx="82.7" cy="33.8" r="1.0"/>
<circle cx="75.5" cy="8.9" r="0.8"/>
<circle cx="106.0" cy="21.0" r="1.0"/>
<circle cx="136.7" cy="28.3" r="1.2"/>
<circle cx="141.3" cy="26.6" r="0.8"/>
<circle cx="95.5" cy="40.9" r="1.2"/>
<circle cx="179.2" cy="44.2" r="1.0"/>
<circle cx="79.2" cy="32.5" r="1.2"/>
<circle cx="127.1" cy="17.3" r="1.0"/>
<circle cx="169.0" cy="39.1" r="1.5"/>
<circle cx="42.6" cy="8.1" r="1.5"/>
<circle cx="4.2" cy="13.4" r="1.0"/>
<circle cx="11.5" cy="13.3" r="1.5"/>
<circle cx="162.8" cy="34.7" r="1.0"/>
<circle cx="67.6" cy="8.3" r="0.8"/>
<circle cx="127.9" cy="23.3" r="0.8"/>
<circle cx="2.2" cy="30.7" r="1.5"/>
<circle cx="136.8" cy="30.1" r="0.8"/>
<circle cx="81.4" cy="1.6" r="1.5"/>
<circle cx="103.5" cy="23.3" r="1.0"/>
<circle cx="168.6" cy="43.0" r="1.0"/>
<circle cx="138.6" cy="20.9" r="1.5"/>
<circle cx="158.1" cy="36.8" r="1.0"/>
<circle cx="52.0" cy="6.6" r="1.0"/>
<circle cx="191.1" cy="66.2" r="1.2"/>
<circle cx="-10.1" cy="33.3" r="1.5"/>
<circle cx="142.3" cy="24.7" r="0.8"/>
<circle cx="135.7" cy="23.0" r="0.8"/>
<circle cx="150.7" cy="30.5" r="1.5"/>
<circle cx="157.3" cy="55.2" r="1.2"/>
<circle cx="124.6" cy="18.0" r="1.5"/>
<circle cx="191.0" cy="52.6" r="0.8"/>
<circle cx="43.4" cy="22.7" r="1.5"/>
<circle cx="7.3" cy="27.0" r="1.2"/>
<circle cx="187.0" cy="54.4" r="1.0"/>
<circle cx="11.1" cy="38.5" r="1.2"/>
<circle cx="209.5" cy="63.9" r="1.0"/>
<circle cx="131.2" cy="6.3" r="1.1"/>
<circle cx="128.9" cy="4.3" r="1.1"/>
<circle cx="169.2" cy="35.1" r="1.1"/>
<circle cx="168.9" cy="36.3" r="1.1"/>
<circle cx="131.7" cy="6.3" r="1.1"/>
<circle cx="169.4" cy="27.8" r="1.1"/>
<circle cx="119.7" cy="9.3" r="1.1"/>
<circle cx="157.4" cy="22.6" r="1.1"/>
<circle cx="163.6" cy="23.1" r="1.1"/>
<circle cx="181.1" cy="35.6" r="1.1"/>
<circle cx="177.0" cy="33.8" r="1.1"/>
<circle cx="159.1" cy="17.6" r="1.1"/>
<circle cx="196.9" cy="49.6" r="1.1"/>
<circle cx="176.6" cy="35.1" r="1.1"/>
<circle cx="155.0" cy="13.9" r="1.1"/>
<circle cx="167.5" cy="27.5" r="1.1"/>
<circle cx="50.8" cy="55.0" r="1.2"/>
<circle cx="13.2" cy="45.8" r="0.9"/>
<circle cx="48.6" cy="63.5" r="0.9"/>
<circle cx="14.7" cy="51.0" r="0.9"/>
<circle cx="-9.2" cy="51.3" r="1.2"/>
<circle cx="-7.6" cy="51.7" r="1.5"/>
<circle cx="-11.8" cy="67.8" r="1.2"/>
<circle cx="31.9" cy="40.0" r="1.5"/>
<circle cx="40.2" cy="65.5" r="1.2"/>
<circle cx="36.6" cy="36.1" r="1.5"/>
<circle cx="43.6" cy="70.1" r="1.5"/>
<circle cx="6.8" cy="53.5" r="1.5"/>
<circle cx="60.6" cy="60.4" r="0.9"/>
<circle cx="-11.2" cy="67.1" r="1.2"/>
<circle cx="48.4" cy="55.7" r="1.2"/>
<circle cx="13.7" cy="64.3" r="1.5"/>
<circle cx="20.6" cy="40.7" r="0.9"/>
<circle cx="-8.7" cy="59.1" r="1.2"/>
<circle cx="30.0" cy="43.0" r="0.9"/>
<circle cx="27.2" cy="55.8" r="1.2"/>
<circle cx="8.4" cy="68.2" r="1.5"/>
<circle cx="24.8" cy="41.5" r="1.5"/>
<circle cx="51.7" cy="63.3" r="0.9"/>
<circle cx="31.9" cy="72.7" r="0.9"/>
<circle cx="19.7" cy="69.0" r="1.2"/>
<circle cx="-11.5" cy="59.3" r="1.2"/>
<circle cx="-1.1" cy="64.8" r="0.9"/>
<circle cx="13.7" cy="53.8" r="1.2"/>
<circle cx="34.5" cy="52.6" r="0.9"/>
<circle cx="58.4" cy="60.3" r="1.2"/>
<circle cx="-14.1" cy="62.8" r="1.5"/>
<circle cx="75.0" cy="15.0" r="0.9"/>
<circle cx="6.1" cy="28.9" r="0.7"/>
<circle cx="121.1" cy="17.6" r="0.9"/>
<circle cx="12.4" cy="4.6" r="0.9"/>
<circle cx="26.5" cy="21.3" r="0.9"/>
<circle cx="96.5" cy="20.0" r="0.7"/>
<circle cx="29.2" cy="9.3" r="0.7"/>
<circle cx="50.3" cy="10.4" r="1.1"/>
<circle cx="0.2" cy="22.7" r="0.9"/>
<circle cx="0.7" cy="22.8" r="1.1"/>
<circle cx="134.8" cy="32.3" r="0.9"/>
<circle cx="67.6" cy="35.7" r="0.9"/>
<circle cx="77.3" cy="7.9" r="0.7"/>
<circle cx="121.2" cy="20.6" r="1.1"/>
<circle cx="57.3" cy="17.8" r="0.9"/>
<circle cx="46.2" cy="11.5" r="0.9"/>
<circle cx="137.7" cy="36.9" r="1.1"/>
<circle cx="24.6" cy="4.4" r="0.7"/>
<circle cx="60.5" cy="34.3" r="1.1"/>
<circle cx="31.7" cy="34.9" r="0.9"/>
<circle cx="10.4" cy="11.6" r="1.1"/>
<circle cx="144.2" cy="28.4" r="0.9"/>
<circle cx="65.1" cy="30.9" r="1.1"/>
<circle cx="82.0" cy="28.9" r="1.1"/>
<circle cx="31.4" cy="9.6" r="1.1"/>
      </g>
    </g>
  </svg>

  <div id="menu" class="abs"></div>
  <div class="abs mi" style="top:82px;letter-spacing:.2px">OLT Information</div>
  <div class="abs mi" style="top:107px">OLT Configuration</div>
  <div class="abs mi" style="top:132px">ONU Configuration</div>
  <div class="abs si sel" style="top:157px">ONU List</div>
  <div class="abs si" style="top:180px">Authentication</div>
  <div class="abs si" style="top:203px">Upgrade</div>
  <div class="abs mi" style="top:226px">Profile Configuration</div>
  <div class="abs mi" style="top:251px">System Configuration</div>

  <div id="tbwrap" class="abs">
    <table>
      <colgroup><col style="width:85px"><col style="width:49px"><col style="width:135px"><col style="width:122px"><col style="width:41px"><col style="width:84px"><col style="width:68px"><col style="width:68px"><col style="width:75px"><col style="width:65px"><col style="width:264px"></colgroup>
      <tr><th>ONU ID</th><th>Status</th><th>MAC Address</th><th>Description</th><th>RTT</th><th>Type</th><th>Auth Flag</th><th>Exchange</th><th>Auth Mode</th><th>Loid/pwd</th><th>Action</th></tr>
<tr><td class="id">EPON0/1:1</td><td class="on">Online</td><td class="mac">58:10:8C:77:FD:CA</td><td>Ecotubos</td><td>2204</td><td class="ty">1GE+2POTS</td><td>Auth</td><td>Idle</td><td>None</td><td>N/A</td><td class="ac"><a>Config</a><a class="p">Profile</a><a class="d">Deregister</a><a class="r">Reset</a><a class="u">Unauth</a></td></tr>
<tr><td class="id">EPON0/1:2</td><td class="on">Online</td><td class="mac">20:57:AF:00:66:BD</td><td>Bateria</td><td>2712</td><td class="ty">1GE</td><td>Auth</td><td>Idle</td><td>None</td><td>N/A</td><td class="ac"><a>Config</a><a class="p">Profile</a><a class="d">Deregister</a><a class="r">Reset</a><a class="u">Unauth</a></td></tr>
<tr><td class="id">EPON0/1:3</td><td class="on">Online</td><td class="mac">20:57:AF:00:66:D0</td><td>CarlosMagno</td><td>2667</td><td class="ty">1GE</td><td>Auth</td><td>Idle</td><td>None</td><td>N/A</td><td class="ac"><a class="v">Config</a><a class="p">Profile</a><a class="d">Deregister</a><a class="r">Reset</a><a class="u">Unauth</a></td></tr>
<tr><td class="id">EPON0/1:4</td><td class="on">Online</td><td class="mac">A4:C6:4F:16:FF:CF</td><td>Decoled</td><td>2633</td><td class="ty">1GE</td><td>Auth</td><td>Idle</td><td>None</td><td>N/A</td><td class="ac"><a class="v">Config</a><a class="p">Profile</a><a class="d">Deregister</a><a class="r">Reset</a><a class="u">Unauth</a></td></tr>
<tr><td class="id">EPON0/1:5</td><td class="on">Online</td><td class="mac">88:66:39:BB:2D:95</td><td>ViaLimpa</td><td>2487</td><td class="ty">1GE</td><td>Auth</td><td>Idle</td><td>None</td><td>N/A</td><td class="ac"><a class="v">Config</a><a class="p">Profile</a><a class="d">Deregister</a><a class="r">Reset</a><a class="u">Unauth</a></td></tr>
<tr><td class="id">EPON0/1:6</td><td class="on">Online</td><td class="mac">58:10:8C:93:3C:79</td><td>Lavajato</td><td>614</td><td class="ty">1GE+2POTS</td><td>Auth</td><td>Idle</td><td>None</td><td>N/A</td><td class="ac"><a>Config</a><a class="p">Profile</a><a class="d">Deregister</a><a class="r">Reset</a><a class="u">Unauth</a></td></tr>
<tr><td class="id">EPON0/1:7</td><td class="on">Online</td><td class="mac">58:10:8C:80:87:A6</td><td>Amarilis</td><td>367</td><td class="ty">1GE+2POTS</td><td>Auth</td><td>Idle</td><td>None</td><td>N/A</td><td class="ac"><a>Config</a><a class="p">Profile</a><a class="d">Deregister</a><a class="r">Reset</a><a class="u">Unauth</a></td></tr>
<tr><td class="id">EPON0/1:8</td><td class="on">Online</td><td class="mac">CC:53:B5:59:D2:2F</td><td>JPetropolis</td><td>1163</td><td class="ty">1FE</td><td>Auth</td><td>Idle</td><td>None</td><td>N/A</td><td class="ac"><a>Config</a><a class="p">Profile</a><a class="d">Deregister</a><a class="r">Reset</a><a class="u">Unauth</a></td></tr>
<tr><td class="id">EPON0/1:9</td><td class="on">Online</td><td class="mac">88:66:39:BB:2D:B9</td><td>Guajiru_Pastor</td><td>837</td><td class="ty">1GE</td><td>Auth</td><td>Idle</td><td>None</td><td>N/A</td><td class="ac"><a class="v">Config</a><a class="p">Profile</a><a class="d">Deregister</a><a class="r">Reset</a><a class="u">Unauth</a></td></tr>
<tr><td class="id">EPON0/1:10</td><td class="on">Online</td><td class="mac">CC:53:B5:59:CE:A2</td><td>container_Posto</td><td>3008</td><td class="ty">1FE</td><td>Auth</td><td>Idle</td><td>None</td><td>N/A</td><td class="ac"><a class="v">Config</a><a class="p">Profile</a><a class="d">Deregister</a><a class="r">Reset</a><a class="u">Unauth</a></td></tr>
<tr><td class="id">EPON0/1:11</td><td class="on">Online</td><td class="mac">58:10:8C:90:90:D7</td><td>Germina</td><td>480</td><td class="ty">1GE+2POTS</td><td>Auth</td><td>Idle</td><td>None</td><td>N/A</td><td class="ac"><a>Config</a><a class="p">Profile</a><a class="d">Deregister</a><a class="r">Reset</a><a class="u">Unauth</a></td></tr>
<tr><td class="id">EPON0/1:12</td><td class="on">Online</td><td class="mac">A4:C6:4F:17:02:B1</td><td>Quitanda</td><td>1121</td><td class="ty">1GE</td><td>Auth</td><td>Idle</td><td>None</td><td>N/A</td><td class="ac"><a>Config</a><a class="p">Profile</a><a class="d">Deregister</a><a class="r">Reset</a><a class="u">Unauth</a></td></tr>
<tr><td class="id">EPON0/1:13</td><td class="on">Online</td><td class="mac">CC:53:B5:59:DC:F1</td><td>BosqueAcacias</td><td>1114</td><td class="ty">1FE</td><td>Auth</td><td>Idle</td><td>None</td><td>N/A</td><td class="ac"><a class="v">Config</a><a class="p">Profile</a><a class="d">Deregister</a><a class="r">Reset</a><a class="u">Unauth</a></td></tr>
<tr><td class="id">EPON0/1:14</td><td class="on">Online</td><td class="mac">58:10:8C:80:87:AE</td><td>ElianeBarros_O.D</td><td>2946</td><td class="ty">1GE+2POTS</td><td>Auth</td><td>Idle</td><td>None</td><td>N/A</td><td class="ac"><a>Config</a><a class="p">Profile</a><a class="d">Deregister</a><a class="r">Reset</a><a class="u">Unauth</a></td></tr>
<tr><td class="id">EPON0/1:15</td><td class="on">Online</td><td class="mac">58:10:8C:80:87:AA</td><td>Rua_Odisser</td><td>3035</td><td class="ty">1GE+2POTS</td><td>Auth</td><td>Idle</td><td>None</td><td>N/A</td><td class="ac"><a class="v">Config</a><a class="p">Profile</a><a class="d">Deregister</a><a class="r">Reset</a><a class="u">Unauth</a></td></tr>
<tr><td class="id">EPON0/1:16</td><td class="on">Online</td><td class="mac">A4:C6:4F:17:02:60</td><td>Boasaude</td><td>909</td><td class="ty">1GE</td><td>Auth</td><td>Idle</td><td>None</td><td>N/A</td><td class="ac"><a class="v">Config</a><a class="p">Profile</a><a class="d">Deregister</a><a class="r">Reset</a><a class="u">Unauth</a></td></tr>
<tr><td class="id">EPON0/1:17</td><td class="on">Online</td><td class="mac">A4:C6:4F:17:00:95</td><td>BR-Olho_D'agua</td><td>2714</td><td class="ty">1GE</td><td>Auth</td><td>Idle</td><td>None</td><td>N/A</td><td class="ac"><a class="v">Config</a><a class="p">Profile</a><a class="d">Deregister</a><a class="r">Reset</a><a class="u">Unauth</a></td></tr>
<tr><td class="id">EPON0/1:18</td><td class="on">Online</td><td class="mac">88:66:39:BB:2E:1C</td><td>PostoIpiranga</td><td>2969</td><td class="ty">1GE</td><td>Auth</td><td>Idle</td><td>None</td><td>N/A</td><td class="ac"><a class="v">Config</a><a class="p">Profile</a><a class="d">Deregister</a><a class="r">Reset</a><a class="u">Unauth</a></td></tr>
<tr><td class="id">EPON0/2:1</td><td class="on">Online</td><td class="mac">58:10:8C:A0:CC:74</td><td>Mimosa</td><td>465</td><td class="ty">1GE+2POTS</td><td>Auth</td><td>Idle</td><td>None</td><td>N/A</td><td class="ac"><a>Config</a><a class="p">Profile</a><a class="d">Deregister</a><a class="r">Reset</a><a class="u">Unauth</a></td></tr>
<tr><td class="id">EPON0/2:2</td><td class="on">Online</td><td class="mac">88:66:39:BB:2E:A3</td><td>RosaIris</td><td>701</td><td class="ty">1GE</td><td>Auth</td><td>Idle</td><td>None</td><td>N/A</td><td class="ac"><a>Config</a><a class="p">Profile</a><a class="d">Deregister</a><a class="r">Reset</a><a class="u">Unauth</a></td></tr>
<tr><td class="id">EPON0/2:3</td><td class="on">Online</td><td class="mac">88:66:39:BB:2D:4D</td><td>Postosaude_R2</td><td>829</td><td class="ty">1GE</td><td>Auth</td><td>Idle</td><td>None</td><td>N/A</td><td class="ac"><a>Config</a><a class="p">Profile</a><a class="d">Deregister</a><a class="r">Reset</a><a class="u">Unauth</a></td></tr>
<tr><td class="id">EPON0/2:4</td><td class="on">Online</td><td class="mac">88:66:39:BB:2D:51</td><td>Posto_R3</td><td>512</td><td class="ty">1GE</td><td>Auth</td><td>Idle</td><td>None</td><td>N/A</td><td class="ac"><a>Config</a><a class="p">Profile</a><a class="d">Deregister</a><a class="r">Reset</a><a class="u">Unauth</a></td></tr>
    </table>
  </div>

  <div id="sb" class="abs"></div>
  <div id="thumb" class="abs"></div>
  <svg class="abs" style="left:1349px;top:86px" width="17" height="552" viewBox="0 0 17 552">
    <path d="M5 11 L8.5 7 L12 11 Z" fill="#505050"/>
    <path d="M5 541 L8.5 545 L12 541 Z" fill="#505050"/>
  </svg>
</div>

<!-- ================= TASKBAR ================= -->
<div id="task" class="abs">
  <svg class="abs" style="left:0;top:0" width="48" height="40" viewBox="0 0 48 40">
    <path d="M16 14.200 L22 13.400 V19.200 H16 Z M23 13.250 L32 12 V19.200 H23 Z M16 20.300 H22 V26.600 L16 25.800 Z M23 20.300 H32 V28 L23 26.750 Z" fill="#fff"/>
  </svg>
  <div id="search" class="abs">
    <svg class="abs" style="left:8px;top:8px" width="24" height="24" viewBox="0 0 24 24"><circle cx="12.200" cy="11" r="9" fill="none" stroke="#111" stroke-width="2.500"/></svg>
    <span>Digite aqui para pesquisar</span>
    <svg class="abs" style="left:315px;top:8px" width="16" height="22" viewBox="0 0 16 22"><rect x="5" y="1.5" width="6" height="11" rx="3" fill="none" stroke="#333" stroke-width="1.2"/><path d="M2.5 10 C2.5 17 13.500 17 13.500 10 M8 15.500 V19 M5 19.500 H11" stroke="#333" stroke-width="1.200" fill="none"/></svg>
  </div>
  <!-- taskbar icons -->
  <svg class="abs" style="left:392px;top:0" width="360" height="40" viewBox="0 0 360 40">
    <!-- task view -->
    <rect x="18" y="13.500" width="12" height="13" fill="none" stroke="#fff" stroke-width="1.200"/><path d="M15.500 15.500 H14 V24.500 H15.500 M32.500 15.500 H34 V24.500 H32.500" stroke="#fff" stroke-width="1.100" fill="none"/>
    <!-- edge -->
    <g transform="translate(75.500 20.500) scale(.9) translate(-75.500 -20.500)"><path d="M64 22 C64 14 70 9.500 76 9.500 C83 9.500 86.500 14.500 86.500 20.500 V22.500 H71.500 C71.800 26 75 27.500 78.500 27.500 C81.500 27.500 84 26.700 86 25.500 V29.700 C83.500 31 81 31.500 77.500 31.500 C70.500 31.500 66.500 27.500 66.500 21.500 C66.500 18 68.500 15 71.500 13.500 C67.500 14.800 65 18 64 22 Z M71.600 18.500 H80.500 C80.500 15.500 78.800 14 76.300 14 C73.800 14 72 15.800 71.600 18.500 Z" fill="#1e88e5"/></g>
    <!-- explorer -->
    <g transform="translate(123.500 20) scale(.93) translate(-123.500 -20)"><path d="M112 11.500 H119 L121 13.500 H135 V28.500 H112 Z" fill="#f3c84b"/><rect x="112" y="15.500" width="23" height="13" fill="#fbe08a"/><path d="M116 20 H131 V28.500 H127 V24 H120 V28.500 H116 Z" fill="#3a9be0"/></g>
    <!-- chrome highlighted -->
    <rect x="149" y="0" width="48" height="40" fill="#36373b"/><rect x="149" y="38" width="48" height="2" fill="#f5a6b4"/>
    <circle cx="173" cy="20" r="11" fill="#db4437"/>
    <path d="M173 20 L163.500 14.500 A11 11 0 0 0 167.500 29.500 Z" fill="#0f9d58"/>
    <path d="M173 20 L167.500 29.500 A11 11 0 0 0 184 20 Z" fill="#ffcd40"/>
    <path d="M163.500 14.500 A11 11 0 0 1 184 20 L173 20 Z" fill="#db4437"/>
    <circle cx="173" cy="20" r="5" fill="#fff"/><circle cx="173" cy="20" r="4" fill="#4285f4"/>
    <!-- cmd -->
    <rect x="210.500" y="10.500" width="22" height="18" fill="#0a0a0a" stroke="#bdbdbd" stroke-width="1"/><rect x="211" y="11" width="21" height="2.500" fill="#3c3c3c"/><path d="M213.500 17.500 H218.500 M220 19.500 H227" stroke="#fff" stroke-width="1.300"/>
    <!-- notepad -->
    <defs><linearGradient id="np" x1="0" y1="1" x2="1" y2="0"><stop offset="0" stop-color="#2b87a6"/><stop offset=".55" stop-color="#8fcfe0"/><stop offset="1" stop-color="#dff2f7"/></linearGradient></defs>
    <path d="M267.800 9.300 L279.900 11 L281.500 27 L276.600 30.500 L259 24.700 Z" fill="#e9eef0"/>
    <path d="M267.800 10 L279 11.600 L275.800 28.600 L259.600 24 Z" fill="url(#np)"/>
    <path d="M279.900 11 L281.500 27 L276.600 30.500 L276 28.500 Z" fill="#b8a878"/>
    <path d="M267.800 9.300 L279.900 11 L279.500 12.500 L267.300 10.700 Z" fill="#9fb4bc"/>
    <rect x="251" y="38" width="40" height="2" fill="#f5a6b4"/>
    <!-- paint -->
    <path d="M309 22 C309 16 314 13 320 13 C326 13 329.500 16.500 329.500 21 C329.500 26 325 29.800 319 29.800 C316.500 29.800 315.500 28 316 26.500 C316.500 25 315 24 313 24.500 C310.500 25 309 24 309 22 Z" fill="#cfe2f1"/>
    <circle cx="312.600" cy="20.300" r="1.700" fill="#e0463e"/><circle cx="316.500" cy="17" r="1.700" fill="#57b947"/><circle cx="321.200" cy="16" r="1.700" fill="#f2b632"/><circle cx="319" cy="22.500" r="1.400" fill="#1c2a4a"/>
    <path d="M329.800 8.500 L331.300 10.300 L323.500 25 L321 30.500 L321.300 24.500 Z" fill="#e0a060"/><path d="M329 8.300 L331.800 9.600 L330.300 12.300 L327.800 11 Z" fill="#f0c898"/>
  </svg>
  <!-- tray -->
  <svg class="abs" style="left:1080px;top:0" width="286" height="40" viewBox="0 0 286 40">
    <g fill="none" stroke="#fff" stroke-width="1.150">
      <circle cx="22.400" cy="14.600" r="2.600"/><path d="M18.200 21 C18.500 17.300 26.300 17.300 26.600 21"/>
      <circle cx="15.900" cy="20.500" r="2.500"/><path d="M11.900 26.900 C12.300 23.200 19.500 23.200 19.900 26.900"/>
      <path d="M49.300 22.800 L55 17.300 L60.700 22.800"/>
      <path d="M145.700 17.700 L148.700 14.700 V25.800 L145.700 22.800 H143.400 V17.700 Z" stroke-width="1.050"/>
      <path d="M151 17.800 C152.100 19 152.100 21.500 151 22.700 M153.300 16 C155.300 18.300 155.300 22.200 153.300 24.500" stroke-width="1.050"/>
      <path d="M155.800 13.800 C158.900 17.300 158.900 23.200 155.800 26.700" stroke-width=".9" stroke-opacity=".5"/>
      <path d="M122.500 26.500 C122.500 20.400 127.500 15.400 133.700 15.400 M125.800 26.500 C125.800 22.200 129.300 18.700 133.700 18.700 M129 26.500 C129 24 131.100 21.900 133.700 21.900" stroke-width="1.250"/>
    </g>
    <circle cx="132.600" cy="25.600" r="1.400" fill="#fff"/>
    <path d="M74.500 23.500 C71 23.500 70.300 19.400 73.800 18.800 C74.300 15.200 79.300 13.800 81.300 17 C83.800 15.600 86.600 17.400 86 20 C88.300 20.300 88 23.500 85.800 23.500 Z" fill="#fff"/>
    <path d="M71.300 21.600 C71.300 19.300 73.600 18.600 75 19.300" stroke="#06070b" stroke-width=".8" fill="none"/>
    <rect x="100.200" y="16.700" width="10.300" height="7.300" fill="none" stroke="#fff" stroke-width="1.100"/><rect x="101.700" y="18.200" width="7.300" height="4.300" fill="#fff"/><rect x="111" y="18.800" width="1.200" height="3" fill="#fff"/>
    <path d="M95.900 14.300 V16.800 M98.300 14.300 V16.800 M95 16.800 H99.200 V19.300 C99.200 20.500 98 21 97.100 21 C96.200 21 95 20.500 95 19.300 Z M97.100 21 V24 H100" stroke="#fff" stroke-width="1" fill="none"/>
    <path d="M245.500 11.500 H261.500 V23.500 H250.500 L245.500 27.500 Z" fill="#fff"/><path d="M248 14.500 H259 M248 17.500 H259 M248 20.500 H256" stroke="#06070b" stroke-width="1"/>
    <circle cx="260.300" cy="27.500" r="7.900" fill="#2c2c2e" stroke="#4c4c50" stroke-width=".8"/>
  </svg>
  <div class="abs" style="left:1335.300px;top:20px;width:10px;color:#fff;font-size:12px;font-weight:bold;line-height:15px;text-align:center">2</div>
  <div class="abs" style="left:1361px;top:0;width:1px;height:40px;background:#4a4a4a"></div>
  <div id="clock" class="abs">23:08<br>26/04/2018</div>
</div>

</body>
</html>
